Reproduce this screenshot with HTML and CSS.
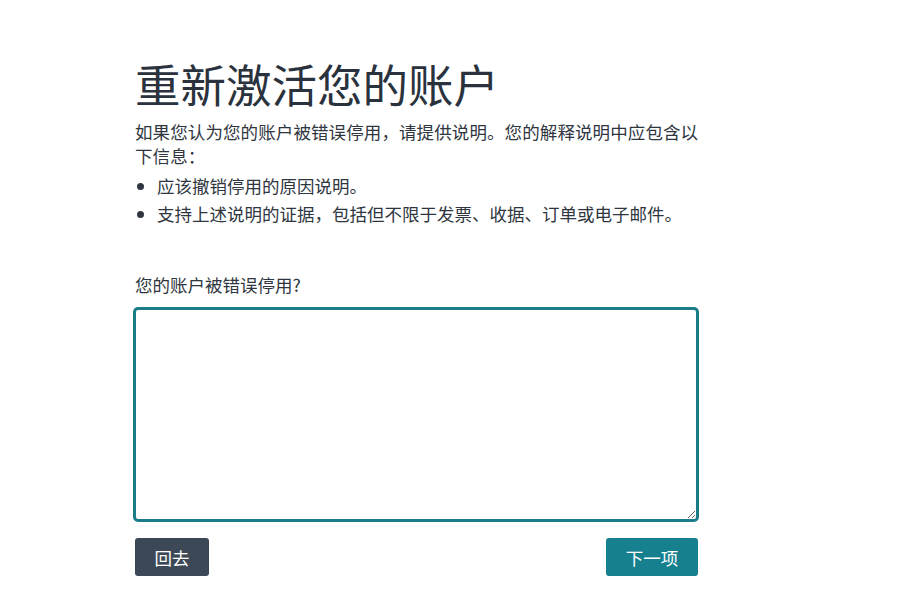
FILE: index.html
```html
<!DOCTYPE html>
<html lang="zh-CN">
<head>
  <meta charset="UTF-8" />
  <title>重新激活您的账户</title>
  <link rel="stylesheet" href="styles.css">
</head>
<body>
  <div class="container">
    <h1 class="title">重新激活您的账户</h1>
    <p class="intro">如果您认为您的账户被错误停用，请提供说明。您的解释说明中应包含以下信息：</p>
    <ul class="points">
      <li>应该撤销停用的原因说明。</li>
      <li>支持上述说明的证据，包括但不限于发票、收据、订单或电子邮件。</li>
    </ul>

    <form class="appeal">
      <label for="reason" class="label">您的账户被错误停用?</label>
      <textarea id="reason" class="reason"></textarea>
      <div class="actions">
        <button type="button" class="btn btn-back">回去</button>
        <button type="button" class="btn btn-next">下一项</button>
      </div>
    </form>
  </div>
</body>
</html>
```

FILE: styles.css
```css
body {
  margin: 0;
  background: #ffffff;
  font-family: "Noto Sans CJK SC", "Noto Sans", sans-serif;
  color: #2f3640;
}

.container {
  width: 565px;
  padding: 46px 0 0 134px;
}

.title {
  margin: 0 0 0 1px;
  font-size: 45.5px;
  font-weight: 400;
  line-height: 74px;
  color: #2a323d;
}

.intro {
  margin: 0 0 0 1px;
  font-size: 17.5px;
  line-height: 24px;
  letter-spacing: 0.1px;
}

.points {
  margin: 4px 0 0 1px;
  padding-left: 22px;
  font-size: 17.5px;
  line-height: 28px;
}

.appeal {
  margin-top: 45px;
}

.label {
  display: block;
  margin-left: 1px;
  font-size: 17.5px;
  line-height: 24px;
  margin-bottom: 10px;
}

.reason {
  display: block;
  box-sizing: border-box;
  width: 566px;
  height: 215px;
  margin-left: -1px;
  border: 3px solid #1b7d89;
  border-radius: 5px;
  outline: none;
  resize: vertical;
  padding: 8px;
  font-family: inherit;
  font-size: 16px;
}

.actions {
  display: flex;
  justify-content: space-between;
  margin: 16px 1px 0 1px;
}

.btn {
  height: 38px;
  border: none;
  border-radius: 3px;
  color: #ffffff;
  font-family: inherit;
  font-size: 17.5px;
  cursor: pointer;
}

.btn-back {
  width: 74px;
  background: #3c4856;
}

.btn-next {
  width: 92px;
  background: #16808f;
}
```
